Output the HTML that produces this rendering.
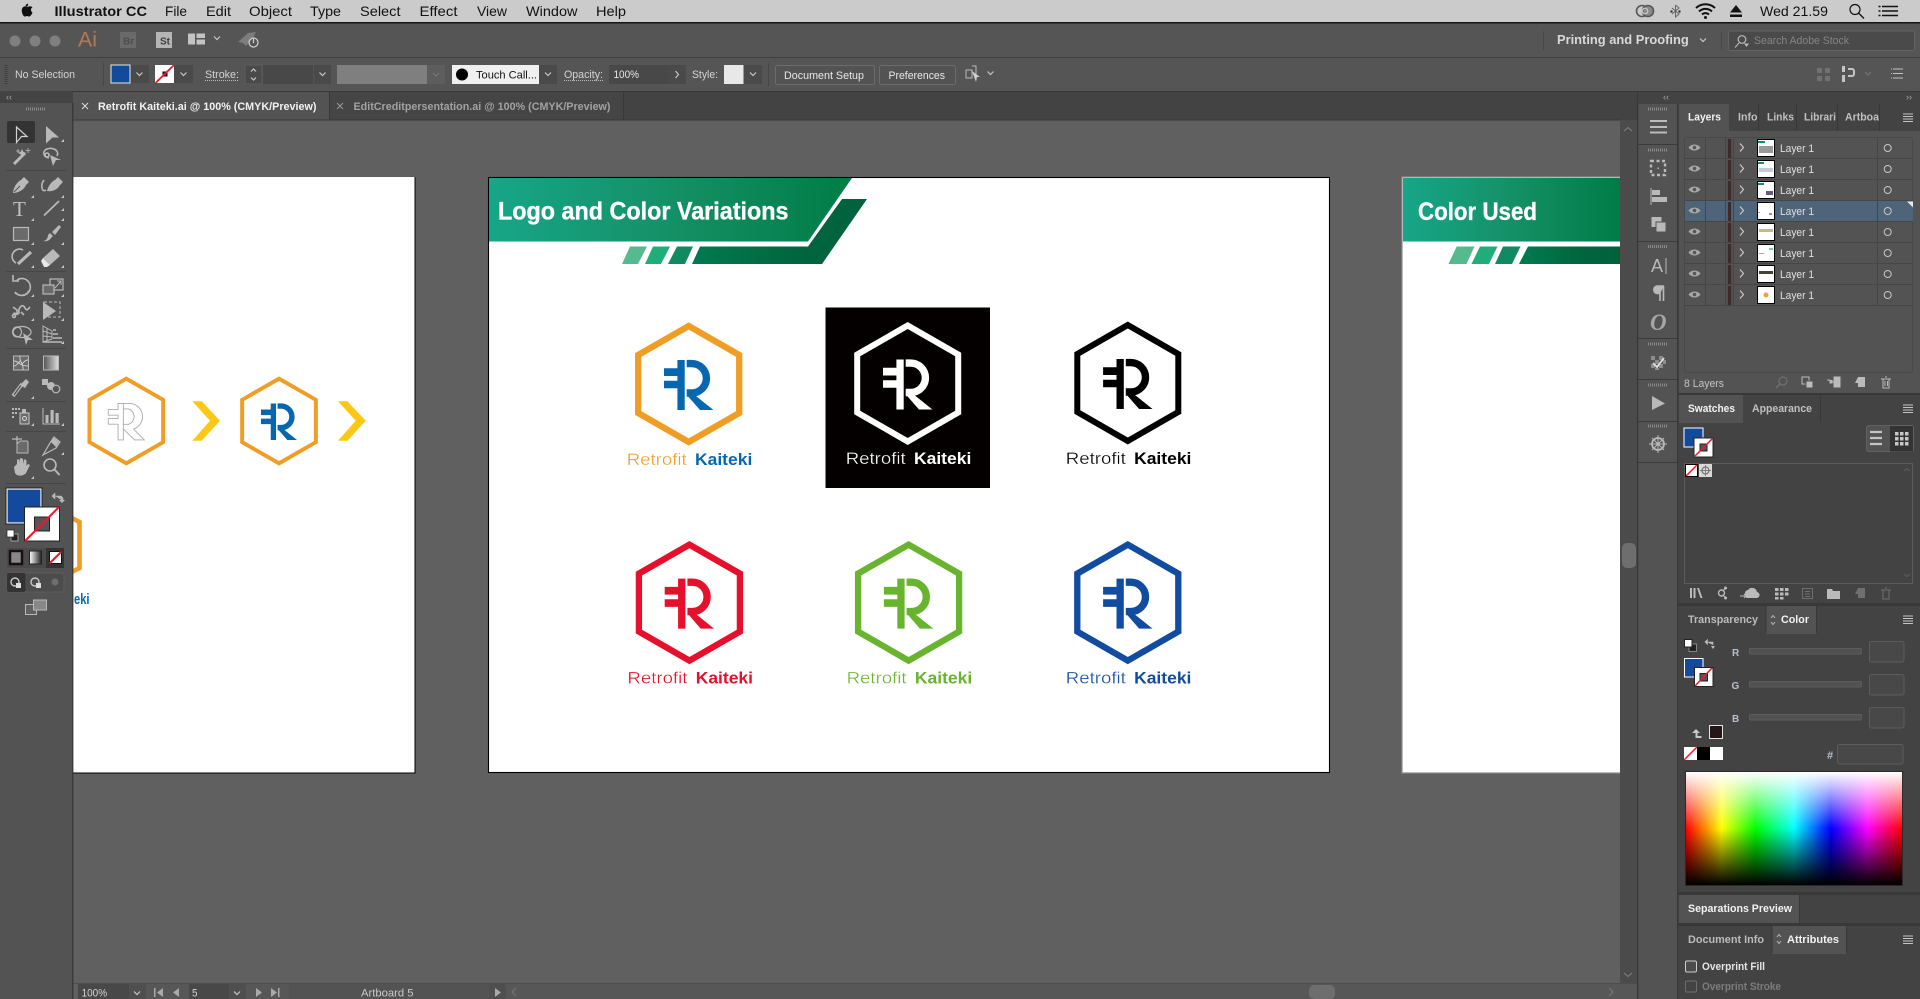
<!DOCTYPE html>
<html lang="en"><head><meta charset="utf-8"><title>Illustrator CC</title>
<style>
html,body{margin:0;padding:0;background:#535353;width:1920px;height:999px;overflow:hidden}
svg{display:block;font-family:"Liberation Sans",sans-serif}
.m{font-size:14px;fill:#111}
.u{font-size:11px;fill:#d4d4d4}
.b{font-size:11px;font-weight:bold;fill:#d8d8d8}
.w{font-size:11px;font-weight:bold;fill:#f2f2f2}
.d{font-size:11px;font-weight:bold;fill:#b4b4b4}
.ic{fill:#b9b9b9}
.is{fill:none;stroke:#b9b9b9;stroke-width:1.6}
.ch{fill:none;stroke:#c8c8c8;stroke-width:1.2}
.fr{fill:#4a4a4a}
.ln{stroke:#464646;stroke-width:1}
</style></head><body>
<svg width="1920" height="999" viewBox="0 0 1920 999" xmlns="http://www.w3.org/2000/svg">
<defs>
<linearGradient id="gb" x1="0" x2="1" y1="0" y2="0"><stop offset="0" stop-color="#17a688"/><stop offset=".5" stop-color="#159066"/><stop offset="1" stop-color="#007c46"/></linearGradient>
<linearGradient id="gd" x1="0" x2="1" y1="0" y2="0"><stop offset="0" stop-color="#007a50"/><stop offset=".6" stop-color="#00663f"/><stop offset="1" stop-color="#00613d"/></linearGradient>
<linearGradient id="gh" x1="0" x2="1" y1="0" y2="0"><stop offset="0" stop-color="#f00"/><stop offset=".165" stop-color="#ff0"/><stop offset=".32" stop-color="#0f0"/><stop offset=".5" stop-color="#0ff"/><stop offset=".67" stop-color="#00f"/><stop offset=".84" stop-color="#f0f"/><stop offset="1" stop-color="#f00"/></linearGradient>
<linearGradient id="gv" x1="0" x2="0" y1="0" y2="1"><stop offset="0" stop-color="#fff"/><stop offset=".5" stop-color="#fff" stop-opacity="0"/><stop offset=".5" stop-color="#000" stop-opacity="0"/><stop offset="1" stop-color="#000"/></linearGradient>
<linearGradient id="gg" x1="0" x2="1" y1="0" y2="0"><stop offset="0" stop-color="#555"/><stop offset="1" stop-color="#ddd"/></linearGradient>
<linearGradient id="gg2" x1="0" x2="1" y1="0" y2="0"><stop offset="0" stop-color="#fff"/><stop offset="1" stop-color="#222"/></linearGradient>
<g id="eye"><path d="M-6,0C-3,-4 3,-4 6,0C3,4 -3,4 -6,0Z" fill="#a8a8a8"/><circle r="1.8" fill="#555"/></g>
<g id="chev"><path d="M-3,-1.5L0,1.5L3,-1.5" class="ch"/></g>
<g id="menu"><path d="M0,0h10M0,2.5h10M0,5h10M0,7.5h10" stroke="#c4c4c4" stroke-width="1"/></g>
<g id="tri"><path d="M3,0V3H0Z" fill="#c4c4c4"/></g>
<g id="grip"><path d="M0,0h20" stroke="#8a8a8a" stroke-width="3" stroke-dasharray="1 1"/></g>
</defs>

<rect width="1920" height="999" fill="#535353"/>
<rect x="73" y="120" width="1547" height="879" fill="#606060"/>

<!-- left artboard -->
<rect x="73" y="177" width="342" height="596" fill="#fff"/>
<path d="M415,177V773H73" fill="none" stroke="#000" stroke-width="1"/>
<g transform="translate(126.3,421) scale(.73)">
<polygon points="0,-58 50.5,-29 50.5,29 0,58 -50.5,29 -50.5,-29" fill="none" stroke="#ef9d25" stroke-width="5.4"/>
<path d="M-24.7,-15.7H-11.3V-24H3A18,18 0 0 1 10,11L24.7,26H11.3L-4,11V26H-11.3V4.3H-24.7V-3.3H-11.3V-8H-24.7Z" fill="#fff" stroke="#aaa" stroke-width="1.2"/>
<path d="M-4,-24V11M-4,-16.5H3A11,11 0 0 1 3,4.5H-4" fill="none" stroke="#aaa" stroke-width="1.2"/>
</g>
<polygon points="192.3,401.3 201.7,401.3 220,420.7 201.7,440.7 192.3,440.7 210,420.7" fill="#fcc813"/>
<g transform="translate(279,421) scale(.73)" fill="#0667b0">
<polygon points="0,-58 50.5,-29 50.5,29 0,58 -50.5,29 -50.5,-29" fill="none" stroke="#ef9d25" stroke-width="5.4"/>
<path d="M-24.7,-15.7h13.4v7.7h-13.4zM-24.7,-3.3h13.4v7.6h-13.4zM-11.3,-24h7.3v50h-7.3z"/><path d="M-2,-20.4H3A14.7,14.7 0 0 1 3,9H-2" fill="none" stroke="#0667b0" stroke-width="7.4"/><polygon points="-.3,12.7 4.7,10 24.7,26 11.3,26"/>
</g>
<polygon points="338,401.3 347.4,401.3 365.7,420.7 347.4,440.7 338,440.7 355.7,420.7" fill="#fcc813"/>
<path d="M68,516L79.5,522V568L68,574" fill="none" stroke="#ef9d25" stroke-width="4.6"/>
<text x="74" y="604" font-size="15" font-weight="bold" fill="#0667b0" textLength="15.5" lengthAdjust="spacingAndGlyphs">eki</text>

<!-- center artboard -->
<rect x="488.5" y="177.5" width="841" height="595" fill="#fff" stroke="#000" stroke-width="1.1"/>
<polygon points="489,178 852,178 808,241.500 489,241.500" fill="url(#gb)"/>
<polygon points="842,199 867,199 822,264 692,264 700,246.500 808,246.500" fill="url(#gd)"/>
<polygon points="630,246.500 647,246.500 638,264 622,264" fill="#55bb8f"/>
<polygon points="653,246.500 670,246.500 661,264 645,264" fill="#1fae7a"/>
<polygon points="677,246.500 693,246.500 685,264 668,264" fill="#118a62"/>
<text x="498" y="219.3" font-size="25" font-weight="bold" fill="#fff" stroke="#fff" stroke-width=".35" textLength="290.5" lengthAdjust="spacingAndGlyphs">Logo and Color Variations</text>

<!-- logo 1 -->
<g transform="translate(688.7,384)" fill="#0667b0">
<polygon points="0,-58 50.5,-29 50.5,29 0,58 -50.5,29 -50.5,-29" fill="none" stroke="#ef9d25" stroke-width="6.3"/>
<path d="M-24.7,-15.7h13.4v7.7h-13.4zM-24.7,-3.3h13.4v7.6h-13.4zM-11.3,-24h7.3v50h-7.3z"/><path d="M-2,-20.4H3A14.7,14.7 0 0 1 3,9H-2" fill="none" stroke="#0667b0" stroke-width="7.4"/><polygon points="-.3,12.7 4.7,10 24.7,26 11.3,26"/>
<text x="-62" y="81" font-size="17" fill="#ef9d25" stroke="#fff" stroke-width=".3" textLength="60" lengthAdjust="spacingAndGlyphs">Retrofit</text>
<text x="6.3" y="81" font-size="17" font-weight="bold" textLength="57.3" lengthAdjust="spacingAndGlyphs">Kaiteki</text>
</g>
<!-- logo 2 black -->
<rect x="825.5" y="307.5" width="164.5" height="180.5" fill="#040000"/>
<g transform="translate(907.7,383.5)" fill="#fff">
<polygon points="0,-58 50.5,-29 50.5,29 0,58 -50.5,29 -50.5,-29" fill="none" stroke="#fff" stroke-width="6"/>
<path d="M-24.7,-15.7h13.4v7.7h-13.4zM-24.7,-3.3h13.4v7.6h-13.4zM-11.3,-24h7.3v50h-7.3z"/><path d="M-2,-20.4H3A14.7,14.7 0 0 1 3,9H-2" fill="none" stroke="#fff" stroke-width="7.4"/><polygon points="-.3,12.7 4.7,10 24.7,26 11.3,26"/>
<text x="-62" y="80.5" font-size="17" stroke="#040000" stroke-width=".3" textLength="60" lengthAdjust="spacingAndGlyphs">Retrofit</text>
<text x="6.3" y="80.5" font-size="17" font-weight="bold" textLength="57.3" lengthAdjust="spacingAndGlyphs">Kaiteki</text>
</g>
<!-- logo 3 -->
<g transform="translate(1127.8,383)" fill="#000">
<polygon points="0,-58 50.5,-29 50.5,29 0,58 -50.5,29 -50.5,-29" fill="none" stroke="#000" stroke-width="6"/>
<path d="M-24.7,-15.7h13.4v7.7h-13.4zM-24.7,-3.3h13.4v7.6h-13.4zM-11.3,-24h7.3v50h-7.3z"/><path d="M-2,-20.4H3A14.7,14.7 0 0 1 3,9H-2" fill="none" stroke="#000" stroke-width="7.4"/><polygon points="-.3,12.7 4.7,10 24.7,26 11.3,26"/>
<text x="-62" y="81" font-size="17" stroke="#fff" stroke-width=".3" textLength="60" lengthAdjust="spacingAndGlyphs">Retrofit</text>
<text x="6.3" y="81" font-size="17" font-weight="bold" textLength="57.3" lengthAdjust="spacingAndGlyphs">Kaiteki</text>
</g>
<!-- logo 4 -->
<g transform="translate(689.4,602.6)" fill="#e60f2c">
<polygon points="0,-58 50.5,-29 50.5,29 0,58 -50.5,29 -50.5,-29" fill="none" stroke="#e60f2c" stroke-width="6.3"/>
<path d="M-24.7,-15.7h13.4v7.7h-13.4zM-24.7,-3.3h13.4v7.6h-13.4zM-11.3,-24h7.3v50h-7.3z"/><path d="M-2,-20.4H3A14.7,14.7 0 0 1 3,9H-2" fill="none" stroke="#e60f2c" stroke-width="7.4"/><polygon points="-.3,12.7 4.7,10 24.7,26 11.3,26"/>
<text x="-62" y="81" font-size="17" stroke="#fff" stroke-width=".3" textLength="60" lengthAdjust="spacingAndGlyphs">Retrofit</text>
<text x="6.3" y="81" font-size="17" font-weight="bold" textLength="57.3" lengthAdjust="spacingAndGlyphs">Kaiteki</text>
</g>
<!-- logo 5 -->
<g transform="translate(908.6,602.6)" fill="#68b42e">
<polygon points="0,-58 50.5,-29 50.5,29 0,58 -50.5,29 -50.5,-29" fill="none" stroke="#68b42e" stroke-width="6.3"/>
<path d="M-24.7,-15.7h13.4v7.7h-13.4zM-24.7,-3.3h13.4v7.6h-13.4zM-11.3,-24h7.3v50h-7.3z"/><path d="M-2,-20.4H3A14.7,14.7 0 0 1 3,9H-2" fill="none" stroke="#68b42e" stroke-width="7.4"/><polygon points="-.3,12.7 4.7,10 24.7,26 11.3,26"/>
<text x="-62" y="81" font-size="17" stroke="#fff" stroke-width=".3" textLength="60" lengthAdjust="spacingAndGlyphs">Retrofit</text>
<text x="6.3" y="81" font-size="17" font-weight="bold" textLength="57.3" lengthAdjust="spacingAndGlyphs">Kaiteki</text>
</g>
<!-- logo 6 -->
<g transform="translate(1127.8,602.6)" fill="#124ca0">
<polygon points="0,-58 50.5,-29 50.5,29 0,58 -50.5,29 -50.5,-29" fill="none" stroke="#124ca0" stroke-width="6.3"/>
<path d="M-24.7,-15.7h13.4v7.7h-13.4zM-24.7,-3.3h13.4v7.6h-13.4zM-11.3,-24h7.3v50h-7.3z"/><path d="M-2,-20.4H3A14.7,14.7 0 0 1 3,9H-2" fill="none" stroke="#124ca0" stroke-width="7.4"/><polygon points="-.3,12.7 4.7,10 24.7,26 11.3,26"/>
<text x="-62" y="81" font-size="17" stroke="#fff" stroke-width=".3" textLength="60" lengthAdjust="spacingAndGlyphs">Retrofit</text>
<text x="6.3" y="81" font-size="17" font-weight="bold" textLength="57.3" lengthAdjust="spacingAndGlyphs">Kaiteki</text>
</g>

<!-- right artboard -->
<rect x="1402" y="177" width="218" height="596" fill="#fff"/>
<path d="M1620,177H1402V773H1620" fill="none" stroke="#8a8a8a" stroke-width="1.2"/>
<rect x="1403" y="178" width="217" height="63.500" fill="url(#gb)"/>
<polygon points="1528,246.500 1620,246.500 1620,264 1519,264" fill="url(#gd)"/>
<polygon points="1456.7,246.500 1474.5,246.500 1466.5,264 1448.5,264" fill="#55bb8f"/>
<polygon points="1480,246.500 1497.5,246.500 1489,264 1471.5,264" fill="#1fae7a"/>
<polygon points="1503,246.500 1520.5,246.500 1512,264 1495,264" fill="#118a62"/>
<text x="1418" y="220" font-size="25" font-weight="bold" fill="#fff" stroke="#fff" stroke-width=".35" textLength="119" lengthAdjust="spacingAndGlyphs">Color Used</text>

<!-- vertical scrollbar -->
<rect x="1620" y="120" width="17" height="863" fill="#4b4b4b"/>
<path d="M1624,131L1628,127.5L1632,131" fill="none" stroke="#777" stroke-width="1.2"/>
<path d="M1624,973L1628,976.5L1632,973" fill="none" stroke="#777" stroke-width="1.2"/>
<rect x="1622" y="543" width="14" height="25" rx="5" fill="#6e6e6e"/>

<!-- status bar -->
<rect x="73" y="983" width="1564" height="16" fill="#575757"/>
<rect x="73" y="983" width="1564" height="1" fill="#4d4d4d"/>
<rect x="73" y="984" width="5" height="15" fill="#606060"/>
<rect x="78" y="984" width="51" height="15" fill="#484848"/>
<text x="81.6" y="996.5" class="u" textLength="25.5" lengthAdjust="spacingAndGlyphs">100%</text>
<rect x="129" y="984" width="17" height="15" fill="#4f4f4f"/><use href="#chev" x="137" y="993"/>
<path d="M154,988v9h1.5v-9zM163,988v9l-6,-4.5z" fill="#aaa"/>
<path d="M179,988v9l-6,-4.5z" fill="#aaa"/>
<rect x="189" y="984" width="40" height="15" fill="#484848"/>
<text x="192" y="996.5" class="u" textLength="5.5" lengthAdjust="spacingAndGlyphs">5</text>
<rect x="229" y="984" width="17" height="15" fill="#4f4f4f"/><use href="#chev" x="237" y="993"/>
<path d="M256,988v9l6,-4.5z" fill="#aaa"/>
<path d="M271,988v9l6,-4.5zM278,988v9h1.5v-9z" fill="#aaa"/>
<rect x="289" y="984" width="200" height="15" fill="#535353"/>
<text x="361" y="996.5" class="u" style="fill:#c8c8c8" textLength="52.5" lengthAdjust="spacingAndGlyphs">Artboard 5</text>
<rect x="489" y="984" width="17" height="15" fill="#4f4f4f"/>
<path d="M495,988v9l6,-4.5z" fill="#aaa"/>
<path d="M516,988L512,992L516,996" fill="none" stroke="#777" stroke-width="1.2"/>
<path d="M1609,988L1613,992L1609,996" fill="none" stroke="#777" stroke-width="1.2"/>
<rect x="1309" y="985" width="26" height="14" rx="5" fill="#6e6e6e"/>

<!-- tab bar -->
<rect x="0" y="91" width="1638" height="29" fill="#434343"/>
<rect x="73" y="91" width="256" height="29" fill="#535353"/>
<rect x="329" y="91" width="294" height="29" fill="#454545"/>
<path d="M329.5,91V120M623.5,91V120M0,91.5H1920M73,120H1620" stroke="#383838" stroke-width="1"/>
<path d="M82,103l6,6m0,-6l-6,6" stroke="#dcdcdc" stroke-width="1"/>
<path d="M337,103l6,6m0,-6l-6,6" stroke="#9c9c9c" stroke-width="1"/>
<text x="98" y="110" class="w" textLength="218.5" lengthAdjust="spacingAndGlyphs">Retrofit Kaiteki.ai @ 100% (CMYK/Preview)</text>
<text x="353.5" y="110" class="d" style="fill:#a2a2a2" textLength="257" lengthAdjust="spacingAndGlyphs">EditCreditpersentation.ai @ 100% (CMYK/Preview)</text>

<!-- tools panel -->
<rect x="0" y="91" width="72" height="12" fill="#434343"/>
<rect x="0" y="103" width="72" height="896" fill="#535353"/>
<rect x="72" y="103" width="1.4" height="896" fill="#3a3a3a"/>
<text x="6" y="100" font-size="9" fill="#aaa">‹‹</text>
<use href="#grip" x="26" y="109"/>
<path d="M6.5,170.5H66M6.5,271.5H66M6.5,348.5H66M6.5,401.5H66M6.5,431.5H66M6.5,483.5H66" stroke="#464646"/>
<rect x="7" y="121" width="28" height="22" rx="2" fill="#333"/>
<path d="M16.5,127L27,136.5H21.5L16.5,142.5Z" fill="none" stroke="#d2d2d2" stroke-width="1.2"/>
<path d="M46,126L59,137.5H52.5L46,143.5Z" class="ic"/>
<g class="ic">
<use href="#tri" x="61" y="139"/><use href="#tri" x="61" y="208"/><use href="#tri" x="31" y="195"/><use href="#tri" x="61" y="195"/><use href="#tri" x="31" y="218"/><use href="#tri" x="61" y="218"/><use href="#tri" x="31" y="242"/><use href="#tri" x="61" y="242"/><use href="#tri" x="31" y="265"/><use href="#tri" x="61" y="265"/><use href="#tri" x="31" y="294"/><use href="#tri" x="61" y="294"/><use href="#tri" x="31" y="318"/><use href="#tri" x="61" y="318"/><use href="#tri" x="61" y="341"/><use href="#tri" x="31" y="396"/><use href="#tri" x="31" y="423"/><use href="#tri" x="61" y="423"/><use href="#tri" x="61" y="452"/><use href="#tri" x="31" y="476"/>
</g>
<path d="M14,164L25,153" stroke="#b9b9b9" stroke-width="3"/><path d="M22,150l1,2l2,1l-2,1l-1,2l-1,-2l-2,-1l2,-1zM28,148v5M25.5,150.5h5M18,149v4M16,151h4" fill="#b9b9b9" stroke="#b9b9b9" stroke-width=".8"/>
<path d="M57,156C60,150 52,147 47,149C42,151 43,157 49,158" class="is"/><path d="M50,155L61,160H56L53,166Z" class="ic"/><circle cx="47" cy="155" r="2" class="is"/>
<path d="M13,193C13,188 17,182 21,180L24,177L29,182L26,185C24,190 18,193 13,193Z" class="ic"/><path d="M14,192L20,186" stroke="#555" stroke-width="1"/>
<path d="M47,191C48,186 52,181 55,180L58,177L63,182L60,185C58,189 53,192 47,191Z" class="ic"/><path d="M44,180C40,185 42,193 46,190" class="is"/>
<text x="13" y="216" font-family="'Liberation Serif',serif" font-size="21" fill="#c0c0c0">T</text>
<path d="M44,215.5L59,201" stroke="#b9b9b9" stroke-width="1.8"/>
<rect x="13.5" y="227.5" width="15" height="13" fill="#6a6a6a" stroke="#b9b9b9" stroke-width="1.2"/>
<path d="M43,241C46,241 48,238 48,235L50,233L53,236L51,238C50,240 47,242 43,241Z" class="ic"/><path d="M52,232L59,225L61,227L55,235Z" class="ic"/>
<path d="M23,250A6.5,6.5 0 1 0 16,263" class="is"/><path d="M18,264L31,252" stroke="#b9b9b9" stroke-width="3.2"/>
<path d="M43,258L53,249L60,256L50,265Z" class="ic"/><path d="M43,258L50,265L47,267H44L41,261Z" fill="#e8e8e8"/>
<path d="M17,280A8.5,8.5 0 1 1 15,292" class="is"/><path d="M13,275V281H19" class="is"/><path d="M15,293A9,9 0 0 0 29,290" fill="none" stroke="#b9b9b9" stroke-width="1.4" stroke-dasharray="1.4 1.4"/>
<rect x="50" y="279" width="13" height="11" fill="none" stroke="#b9b9b9" stroke-width="1.2"/><rect x="43" y="285" width="11" height="9" fill="#6a6a6a" stroke="#b9b9b9" stroke-width="1.2"/><path d="M55,288L61,281M57,281h4v4" fill="none" stroke="#b9b9b9"/>
<path d="M13,315C15,310 16,317 19,313C18,307 23,303 25,308C27,312 29,308 30,307" class="is"/><path d="M13,307l4,3v5M21,312l3,3" class="is"/><circle cx="14" cy="316" r="1.5" class="is"/>
<path d="M43,302L56,311L43,320Z" class="ic"/><rect x="44" y="302" width="16" height="15" fill="none" stroke="#b9b9b9" stroke-dasharray="3 2"/>
<ellipse cx="17" cy="332" rx="4.5" ry="5" class="is" style="stroke-width:1.2"/><ellipse cx="22" cy="332" rx="9" ry="5.5" class="is" style="stroke-width:1.2"/><path d="M23,333L33,340H28L26,345Z" class="ic"/>
<path d="M43,326L52,331V339L43,342ZM43,331L52,334M43,336L52,337M47,328V341" class="is" style="stroke-width:1"/><path d="M53,330h3M53,334h5M53,338h9M43,342h19" stroke="#b9b9b9" stroke-width="1.4"/>
<rect x="13.5" y="356" width="15" height="14" fill="#6a6a6a" stroke="#b9b9b9"/><path d="M14,361C19,361 19,366 28,366M20,356C19,362 24,364 23,370M14,366C17,366 18,363 20,361M28,360C25,360 24,362 22,364" fill="none" stroke="#d4d4d4" stroke-width=".9"/>
<rect x="43.5" y="356" width="15" height="14" fill="url(#gg)" stroke="#b9b9b9"/>
<path d="M13,396L22,384" stroke="#b9b9b9" stroke-width="3.6" fill="none"/><path d="M14,395L21,385" stroke="#555" stroke-width="1.4"/><path d="M20,385L26,379L29,382L25,388Z" class="ic"/>
<rect x="42" y="379" width="6" height="6" class="ic"/><circle cx="51" cy="386" r="4" class="ic"/><circle cx="56" cy="389" r="3.8" fill="#535353" stroke="#b9b9b9" stroke-width="1.2"/>
<path d="M12,408h2v2h-2zM15,408h2v2h-2zM18,408h2v2h-2zM12,412h2v2h-2zM15,412h2v2h-2zM12,416h2v2h-2z" class="ic"/><rect x="20" y="413" width="9" height="11" fill="#6a6a6a" stroke="#c8c8c8"/><rect x="22" y="409" width="4" height="3.5" class="ic"/><circle cx="24.5" cy="418.5" r="2" fill="none" stroke="#ddd"/>
<path d="M43,408V424H60" class="is" style="stroke-width:1"/><path d="M45.5,415h3v8h-3zM50.5,410h3.2v13h-3.2zM55.5,413h3.2v10h-3.2z" class="ic"/>
<path d="M17,436v8M12,439h10" stroke="#b9b9b9" stroke-width="1.2"/><path d="M20,441h7l1,1v11H17v-9z" fill="#6a6a6a" stroke="#b9b9b9"/>
<path d="M43,455L50,443L54,437L60,442L56,448Z" class="is" style="stroke-width:1.2"/><path d="M54,438L59,442L56,447L51,442Z" class="ic"/>
<path d="M14,467L17,464V460L18,459L19.5,460V464L20,458.5L22,458L23,459.5V464L24,459.5L26,459.5L26.5,461V466L28,464L30,465L26,473C24,476 17,477 15,473Z" class="ic"/>
<circle cx="50" cy="465" r="6" class="is"/><path d="M54.5,469.5L59.5,475" stroke="#b9b9b9" stroke-width="2"/>

<!-- fill/stroke big -->
<path d="M52,496l3,-3v6zM55,496h6l2,2v3" fill="#b9b9b9" stroke="#b9b9b9" stroke-width=".6" stroke-linejoin="round"/><path d="M59,500l3,3l3,-3z" fill="#b9b9b9"/>
<rect x="7" y="489" width="34" height="34" fill="#134a9b" stroke="#fff" stroke-width="1.2"/>
<rect x="6" y="488" width="36" height="36" fill="none" stroke="#1f1f1f" stroke-width="1"/>
<rect x="24.5" y="507" width="35" height="34" fill="#fff" stroke="#222" stroke-width="1"/>
<rect x="34.5" y="517" width="15" height="14" fill="#555" stroke="#222" stroke-width="1"/>
<path d="M25,541L59,507" stroke="#f4142c" stroke-width="2"/>
<rect x="11" y="534" width="7" height="7" fill="#222" stroke="#ccc" stroke-width=".7"/><rect x="7" y="530" width="7" height="7" fill="#fff" stroke="#222" stroke-width=".7"/>
<rect x="7" y="548" width="57" height="20" rx="2" fill="#4a4a4a"/>
<rect x="46" y="548" width="18" height="20" fill="#333"/>
<rect x="10" y="551" width="12" height="13" fill="#888" stroke="#1a1010" stroke-width="2.5"/><rect x="29.5" y="551" width="12" height="13" fill="url(#gg2)" stroke="#222"/>
<rect x="49.5" y="551.5" width="12" height="12" fill="#fff" stroke="#111"/><path d="M49.5,563.5L61.5,551.5" stroke="#f4142c" stroke-width="2"/>
<rect x="7" y="573" width="57" height="19" rx="2" fill="#4c4c4c" stroke="#5c5c5c"/><rect x="7" y="573" width="18.5" height="19" rx="2" fill="#333"/>
<circle cx="15" cy="582" r="4" fill="none" stroke="#c8c8c8" stroke-width="1.4"/><rect x="16" y="583" width="5" height="5" fill="#ddd"/>
<circle cx="35" cy="582" r="4" fill="none" stroke="#c8c8c8" stroke-width="1.4"/><rect x="36" y="583" width="5" height="5" fill="#ddd"/>
<circle cx="55" cy="582" r="3.5" fill="#6e6e6e"/>
<path d="M25.5,604.5h11v10h-11z" fill="#606060" stroke="#b9b9b9"/><rect x="33.5" y="600" width="13" height="10" fill="#888" stroke="#b9b9b9"/>

<!-- menubar -->
<rect width="1920" height="22" fill="#cbcbcb"/>
<rect y="22" width="1920" height="1.5" fill="#151515"/>
<path d="M27.5,6C27,6.5 26,6.8 25.5,6.5C25.5,5 26.5,4 28,3.5C28.2,5 28,5.5 27.5,6ZM31,9.5C30.9,8.5 31.5,8 32.5,7.5C31.5,6.2 29.5,6 28.5,6.6C27.5,7 27,7 26,6.6C24.5,6 22,7 21.8,10C21.6,12.5 23,16 24.5,16.5C25.5,16.8 26,16 27,16C28,16 28.5,16.8 29.5,16.5C30.8,16 32,14 32.5,12.5C31.5,12 31,11 31,9.5Z" fill="#111"/>
<text x="54.5" y="16" class="m" font-weight="bold" textLength="92.5" lengthAdjust="spacingAndGlyphs">Illustrator CC</text>
<text x="165" y="16" class="m" textLength="22" lengthAdjust="spacingAndGlyphs">File</text>
<text x="206" y="16" class="m" textLength="25" lengthAdjust="spacingAndGlyphs">Edit</text>
<text x="249" y="16" class="m" textLength="43" lengthAdjust="spacingAndGlyphs">Object</text>
<text x="310" y="16" class="m" textLength="31" lengthAdjust="spacingAndGlyphs">Type</text>
<text x="360" y="16" class="m" textLength="40.5" lengthAdjust="spacingAndGlyphs">Select</text>
<text x="419.5" y="16" class="m" textLength="38" lengthAdjust="spacingAndGlyphs">Effect</text>
<text x="477" y="16" class="m" textLength="30" lengthAdjust="spacingAndGlyphs">View</text>
<text x="526" y="16" class="m" textLength="51.5" lengthAdjust="spacingAndGlyphs">Window</text>
<text x="596" y="16" class="m" textLength="30" lengthAdjust="spacingAndGlyphs">Help</text>
<circle cx="1642" cy="11" r="5.5" fill="none" stroke="#555" stroke-width="1.6"/><circle cx="1648" cy="11" r="5.5" fill="#8a8a8a" stroke="#555" stroke-width="1.6"/><circle cx="1645" cy="11" r="2.8" fill="none" stroke="#cbcbcb" stroke-width="1.2"/>
<path d="M1675.5,5V17L1679,14L1672,8M1675.5,5L1679,8L1672,14" fill="none" stroke="#666" stroke-width="1"/><path d="M1670.5,10.5h2v2h-2zM1678.5,10.5h2v2h-2z" fill="#222"/>
<path d="M1696,8A14,14 0 0 1 1715,8M1699,11.5A9.5,9.5 0 0 1 1712,11.5M1702,14.5A5,5 0 0 1 1709,14.5" fill="none" stroke="#111" stroke-width="2"/><circle cx="1705.5" cy="17.5" r="1.5" fill="#111"/>
<path d="M1730,12.5L1736,5L1742,12.5ZM1730,14.5h12v2.5h-12z" fill="#111"/>
<text x="1760" y="16" class="m" textLength="68" lengthAdjust="spacingAndGlyphs">Wed 21.59</text>
<circle cx="1855" cy="9.5" r="5" fill="none" stroke="#111" stroke-width="1.2"/><path d="M1858.5,13L1864,18.5" stroke="#111" stroke-width="1.3"/>
<path d="M1882,6.5h16M1882,11h16M1882,15.5h16M1878.5,6.5h2M1878.5,11h2M1878.5,15.5h2" stroke="#111" stroke-width="1.6"/>

<!-- app bar -->
<path d="M0,57V27Q0,23.5 4,23.5H1916Q1920,23.5 1920,27V57Z" fill="#555"/>
<rect y="57" width="1920" height="1.3" fill="#3e3e3e"/>
<circle cx="15" cy="41" r="5.5" fill="#7f7f7f"/><circle cx="35" cy="41" r="5.5" fill="#7f7f7f"/><circle cx="55" cy="41" r="5.5" fill="#7f7f7f"/>
<text x="78" y="46.5" font-size="21" fill="#b27b58" textLength="19" lengthAdjust="spacingAndGlyphs">Ai</text>
<rect x="120" y="32" width="16" height="16" fill="#6a6a6a"/><text x="123" y="44.5" font-size="10" font-weight="bold" fill="#4d4d4d">Br</text>
<rect x="156" y="32" width="16" height="16" fill="#b5b5b5"/><text x="160" y="44.5" font-size="10" font-weight="bold" fill="#3f3f3f">St</text>
<path d="M188,33.5h7v11h-7zM196.5,33.5h8.5v4.5h-8.5zM196.5,39.5h8.5v5h-8.500z" fill="#c4c4c4"/>
<use href="#chev" x="217" y="38"/>
<path d="M238,42L248,33L256,32L253,38L246,46L243,43Z" fill="#7d7d7d"/><circle cx="253.5" cy="42.5" r="4.5" fill="none" stroke="#ccc" stroke-width="1.3"/><path d="M253.5,38.5v4.5" stroke="#ccc" stroke-width="1.3"/>
<path d="M1543.5,31V50M1721.5,31V50" stroke="#494949"/>
<text x="1557" y="44" font-size="13" font-weight="bold" fill="#d9d9d9" textLength="131.7" lengthAdjust="spacingAndGlyphs">Printing and Proofing</text>
<use href="#chev" x="1703" y="40"/>
<rect x="1728.5" y="31" width="186" height="19.5" rx="2" fill="#4a4a4a" stroke="#626262"/>
<circle cx="1742" cy="39.5" r="3.8" fill="none" stroke="#bbb" stroke-width="1.2"/><path d="M1739,43L1735,47.5M1745,44h3l-1.5,2z" stroke="#bbb" fill="#bbb"/>
<text x="1754" y="44" class="u" style="fill:#858585" textLength="95" lengthAdjust="spacingAndGlyphs">Search Adobe Stock</text>

<!-- control bar -->
<rect y="58" width="1920" height="33" fill="#555"/>
<path d="M6,65V84" stroke="#3f3f3f" stroke-width="3" stroke-dasharray="1 1"/>
<text x="15" y="78" class="u" textLength="60" lengthAdjust="spacingAndGlyphs">No Selection</text>
<path d="M103.5,63V86M768.5,63V86" stroke="#474747"/>
<rect x="111" y="65" width="19" height="18" fill="#134a9b" stroke="#e8e8e8"/>
<rect x="130.5" y="65" width="18.5" height="18" class="fr"/><use href="#chev" x="139.5" y="74"/>
<rect x="155" y="65" width="19" height="18" fill="#fff"/><rect x="163" y="72" width="4" height="4" fill="#444" stroke="#000"/><path d="M155.5,83L174,65" stroke="#f4142c" stroke-width="1.8"/>
<rect x="174" y="65" width="19" height="18" class="fr"/><use href="#chev" x="183.5" y="74"/>
<text x="205" y="78" class="u" textLength="34" lengthAdjust="spacingAndGlyphs">Stroke:</text>
<path d="M205,80.5H239" stroke="#bbb" stroke-dasharray="1 1"/>
<rect x="245" y="65" width="17" height="19" class="fr" stroke="#5d5d5d"/>
<path d="M251,71.5L253.5,69L256,71.5M251,77.5L253.5,80L256,77.5" class="ch"/>
<rect x="263" y="65" width="50" height="19" fill="#484848"/>
<rect x="314" y="65" width="17" height="19" class="fr"/><use href="#chev" x="322.5" y="74"/>
<rect x="337" y="65" width="90" height="19" fill="#7f7f7f"/>
<rect x="427" y="65" width="18" height="19" fill="#5d5d5d"/><path d="M433,73L436,76L439,73" fill="none" stroke="#777" stroke-width="1.1"/>
<rect x="452" y="65" width="87" height="19" fill="#f0f0f0"/><circle cx="462" cy="74.5" r="6" fill="#000"/>
<text x="476" y="78.5" class="u" style="fill:#111" textLength="61" lengthAdjust="spacingAndGlyphs">Touch Call...</text>
<rect x="539" y="65" width="18" height="19" class="fr"/><use href="#chev" x="548" y="74"/>
<text x="564" y="78" class="u" textLength="39" lengthAdjust="spacingAndGlyphs">Opacity:</text>
<path d="M564,80.5H603" stroke="#bbb" stroke-dasharray="1 1"/>
<rect x="609" y="65" width="59" height="19" fill="#484848"/>
<text x="613.5" y="78" class="u" style="fill:#e8e8e8" textLength="25.5" lengthAdjust="spacingAndGlyphs">100%</text>
<rect x="668" y="65" width="18" height="19" class="fr"/><path d="M675.5,71L678.5,74.5L675.5,78" class="ch"/>
<text x="692" y="78" class="u" textLength="26" lengthAdjust="spacingAndGlyphs">Style:</text>
<rect x="724" y="65" width="19.5" height="19" fill="#e8e8e8"/>
<rect x="743.5" y="65" width="18.5" height="19" class="fr"/><use href="#chev" x="753" y="74"/>
<rect x="775.5" y="65.5" width="99" height="19" rx="2" fill="#535353" stroke="#6c6c6c"/>
<text x="784" y="79" class="u" style="fill:#e8e8e8" textLength="80" lengthAdjust="spacingAndGlyphs">Document Setup</text>
<rect x="879.5" y="65.5" width="76" height="19" rx="2" fill="#535353" stroke="#6c6c6c"/>
<text x="888.5" y="79" class="u" style="fill:#e8e8e8" textLength="56.5" lengthAdjust="spacingAndGlyphs">Preferences</text>
<path d="M966,70h6v8h-6zM972,66h4v10" fill="none" stroke="#bbb"/><path d="M972,71l8,6h-3l-1,5z" fill="#cfcfcf"/><use href="#chev" x="990.5" y="73"/>
<path d="M1817,68h5v5h-5zM1825,68h5v5h-5zM1817,76h5v5h-5zM1825,76h5v5h-5z" fill="#717171"/>
<path d="M1842,66h3v6h-3zM1842,75h3v7h-3z" fill="#c4c4c4"/><path d="M1848,69h4a2,2 0 0 1 2,2v3a2,2 0 0 1 -2,2h-4" fill="none" stroke="#c4c4c4" stroke-width="2"/><path d="M1865,72L1868,75L1871,72" fill="none" stroke="#777"/>
<path d="M1893,69h10M1893,73.5h10M1893,78h10M1891,69h1M1891,73.5h1M1891,78h1" stroke="#c4c4c4"/>

<!-- right dock -->
<rect x="1637" y="91" width="283" height="908" fill="#434343"/>
<rect x="1638" y="103" width="39.5" height="896" fill="#535353"/>
<rect x="1637" y="91" width="1.3" height="908" fill="#383838"/>
<rect x="1677" y="103" width="1.3" height="896" fill="#383838"/>
<rect x="1638" y="91" width="282" height="13" fill="#434343"/>
<path d="M1638,91.5H1920" stroke="#383838"/>
<text x="1663" y="100" font-size="9" fill="#aaa">‹‹</text>
<text x="1906" y="100" font-size="9" fill="#aaa">››</text>
<path d="M1638,144.5h39M1638,241.5h39M1638,338.5h39M1638,379.5h39M1638,421.5h39M1638,462.5h39" stroke="#3a3a3a"/>
<path d="M1648,109h20M1648,150h20M1648,246.5h20M1648,344h20M1648,385h20M1648,426h20" stroke="#8a8a8a" stroke-width="3" stroke-dasharray="1 1"/>
<path d="M1650,121h17M1650,127h17M1650,132.5h17" stroke="#bbb" stroke-width="2"/>
<rect x="1651" y="161" width="14" height="14" fill="none" stroke="#b9b9b9" stroke-width="2.4" stroke-dasharray="3 2.5"/><rect x="1657.5" y="167.5" width="1.5" height="1.5" fill="#b9b9b9"/>
<path d="M1651,188V205" stroke="#b9b9b9"/><rect x="1652" y="190" width="8" height="5" fill="#b9b9b9"/><rect x="1652" y="197" width="15" height="5" fill="#b9b9b9"/>
<rect x="1651.5" y="217" width="10" height="10" fill="#b9b9b9"/><rect x="1656" y="222" width="10" height="10" fill="#b9b9b9" stroke="#535353"/>
<text x="1651" y="272" font-size="18" fill="#b9b9b9">A</text><path d="M1666,258V274" stroke="#b9b9b9"/>
<path d="M1660,286V301M1663.5,286V301M1664,286H1657A3.8,3.8 0 0 0 1657,293.5H1660" fill="#b9b9b9" stroke="#b9b9b9" stroke-width="1.6"/>
<text x="1650" y="330" font-family="'Liberation Serif',serif" font-style="italic" font-weight="bold" font-size="23" fill="#a6a6a6">O</text>
<path d="M1651,356h4v4h-4zM1659,356h4v4h-4zM1655,360h4v4h-4zM1663,360h3v4h-3zM1651,364h4v4h-4zM1659,364h4v4h-4zM1655,368h4v2h-4z" fill="#8c8c8c"/><path d="M1653,363l4,4l7,-9" fill="none" stroke="#e4e4e4" stroke-width="1.8"/>
<path d="M1652,396L1665,403.5L1652,410Z" fill="#b9b9b9"/>
<circle cx="1658" cy="444" r="6" fill="none" stroke="#b9b9b9" stroke-width="1.8"/><circle cx="1658" cy="444" r="1.8" fill="#b9b9b9"/><path d="M1658,435V453M1649,444H1667M1652,438L1664,450M1664,438L1652,450" stroke="#b9b9b9"/>

<!-- Layers panel -->
<rect x="1679" y="104" width="241" height="27" fill="#434343"/>
<rect x="1679" y="131" width="241" height="262" fill="#535353"/>
<rect x="1679" y="104" width="50" height="28" fill="#535353"/>
<path d="M1758.5,104V131M1796.5,104V131M1837.5,104V131M1879.5,104V131" stroke="#383838"/>
<text x="1688" y="120.5" class="w" textLength="33" lengthAdjust="spacingAndGlyphs">Layers</text>
<text x="1738" y="120.5" class="b" style="fill:#c0c0c0" textLength="19.5" lengthAdjust="spacingAndGlyphs">Info</text>
<text x="1767" y="120.5" class="b" style="fill:#c0c0c0" textLength="27" lengthAdjust="spacingAndGlyphs">Links</text>
<text x="1804" y="120.5" class="b" style="fill:#c0c0c0" textLength="32" lengthAdjust="spacingAndGlyphs">Librari</text>
<text x="1845" y="120.5" class="b" style="fill:#c0c0c0" textLength="34" lengthAdjust="spacingAndGlyphs">Artboa</text>
<use href="#menu" x="1903" y="114"/>
<rect x="1684.5" y="137.5" width="228" height="235" rx="2" fill="#535353" stroke="#494949"/>
<rect x="1685" y="200.5" width="228" height="21" fill="#4e6479"/>
<path d="M1907,201.5h6v6z" fill="#e8e8e8"/>
<g class="ln"><path d="M1685,158.5H1913M1685,179.5H1913M1685,200.5H1913M1685,221.5H1913M1685,242.5H1913M1685,263.5H1913M1685,284.5H1913M1685,305.5H1913"/><path d="M1705.5,138V305M1725.5,138V305M1733.5,138V305M1877.5,138V305"/></g>
<path d="M1729.5,139V305" stroke="#3d2b2b" stroke-width="3.2" stroke-dasharray="19 2"/>
<use href="#eye" x="1694.5" y="147.5"/><use href="#eye" x="1694.5" y="168.5"/><use href="#eye" x="1694.5" y="189.5"/><use href="#eye" x="1694.5" y="210.5"/><use href="#eye" x="1694.5" y="231.5"/><use href="#eye" x="1694.5" y="252.5"/><use href="#eye" x="1694.5" y="273.5"/><use href="#eye" x="1694.5" y="294.5"/>
<path d="M1740,143.5l3.5,4l-3.5,4M1740,164.5l3.5,4l-3.5,4M1740,185.5l3.5,4l-3.5,4M1740,206.5l3.5,4l-3.5,4M1740,227.5l3.5,4l-3.5,4M1740,248.5l3.5,4l-3.5,4M1740,269.5l3.5,4l-3.5,4M1740,290.5l3.5,4l-3.5,4" class="ch"/>
<g fill="#fff" stroke="#000">
<rect x="1757.5" y="139.5" width="17" height="17"/><rect x="1757.5" y="160.5" width="17" height="17"/><rect x="1757.5" y="181.5" width="17" height="17"/><rect x="1757.5" y="202.5" width="17" height="17"/><rect x="1757.5" y="223.5" width="17" height="17"/><rect x="1757.5" y="244.5" width="17" height="17"/><rect x="1757.5" y="265.5" width="17" height="17"/><rect x="1757.5" y="286.5" width="17" height="17"/>
</g>
<path d="M1758,141h7v2h-7z" fill="#109070"/><path d="M1759,146h14v7h-14z" fill="#999"/>
<path d="M1758,162h6v2h-6z" fill="#109070"/><path d="M1759,168h14v4h-14z" fill="#c4ccd8"/>
<path d="M1758,183h6v2h-6z" fill="#109070"/><path d="M1766,191h7v4h-7z" fill="#6a5a7a"/>
<path d="M1758,212h2v1h-2zM1769,213h3v2h-3z" fill="#b88"/>
<path d="M1759,229h14v3h-14z" fill="#c8b888"/>
<path d="M1769,248h4v2h-4z" fill="#7cb"/><path d="M1759,253h5v1h-5z" fill="#c99"/>
<path d="M1759,271h14v3h-14z" fill="#443"/>
<circle cx="1766" cy="295" r="2.5" fill="#eaa24a"/>
<g class="u" style="fill:#e0e0e0">
<text x="1780" y="152" textLength="34" lengthAdjust="spacingAndGlyphs">Layer 1</text>
<text x="1780" y="173" textLength="34" lengthAdjust="spacingAndGlyphs">Layer 1</text>
<text x="1780" y="194" textLength="34" lengthAdjust="spacingAndGlyphs">Layer 1</text>
<text x="1780" y="215" textLength="34" lengthAdjust="spacingAndGlyphs">Layer 1</text>
<text x="1780" y="236" textLength="34" lengthAdjust="spacingAndGlyphs">Layer 1</text>
<text x="1780" y="257" textLength="34" lengthAdjust="spacingAndGlyphs">Layer 1</text>
<text x="1780" y="278" textLength="34" lengthAdjust="spacingAndGlyphs">Layer 1</text>
<text x="1780" y="299" textLength="34" lengthAdjust="spacingAndGlyphs">Layer 1</text>
</g>
<g fill="none" stroke="#c8c8c8" stroke-width="1"><circle cx="1887.7" cy="148" r="3.5"/><circle cx="1887.7" cy="169" r="3.5"/><circle cx="1887.7" cy="190" r="3.5"/><circle cx="1887.7" cy="211" r="3.5"/><circle cx="1887.7" cy="232" r="3.5"/><circle cx="1887.7" cy="253" r="3.5"/><circle cx="1887.7" cy="274" r="3.5"/><circle cx="1887.7" cy="295" r="3.5"/></g>
<text x="1684" y="387" class="u" style="fill:#c4c4c4" textLength="40" lengthAdjust="spacingAndGlyphs">8 Layers</text>
<circle cx="1783" cy="381" r="4" fill="none" stroke="#6f6f6f" stroke-width="1.2"/><path d="M1780,384L1776,388" stroke="#6f6f6f" stroke-width="1.5"/>
<rect x="1802" y="377" width="7" height="7" fill="none" stroke="#bbb"/><rect x="1806" y="381" width="7" height="7" fill="#bbb" stroke="#535353"/>
<path d="M1827,380h3v3h2v-3M1832,382h3M1834,377h6v10h-6z" fill="#bbb" stroke="#bbb"/>
<path d="M1858,377h7v10h-7v-4h-3z" fill="#bbb"/>
<path d="M1881,379h10M1883,379v9h6v-9M1885,377h2M1885,381v5M1887.5,381v5" fill="none" stroke="#bbb"/>

<!-- Swatches panel -->
<rect x="1678" y="393" width="242" height="2" fill="#383838"/>
<rect x="1679" y="395" width="241" height="27" fill="#434343"/>
<rect x="1679" y="395" width="64" height="28" fill="#535353"/>
<path d="M1820.5,395V422" stroke="#383838"/>
<text x="1688" y="412" class="w" textLength="47" lengthAdjust="spacingAndGlyphs">Swatches</text>
<text x="1752" y="412" class="b" style="fill:#c0c0c0" textLength="60" lengthAdjust="spacingAndGlyphs">Appearance</text>
<use href="#menu" x="1903" y="405"/>
<rect x="1684" y="428" width="19" height="19" fill="#134a9b" stroke="#fff"/>
<rect x="1694" y="438" width="19" height="19" fill="#fff" stroke="#222"/><rect x="1700" y="444" width="7" height="7" fill="#555" stroke="#222"/><path d="M1695,456L1712,439" stroke="#f4142c" stroke-width="1.5"/>
<rect x="1866.5" y="425.5" width="47" height="26" rx="2" fill="#535353" stroke="#616161"/><rect x="1890" y="426" width="23" height="25.5" fill="#333"/>
<path d="M1870,432h12M1870,438h12M1870,444h12" stroke="#c4c4c4" stroke-width="2.2"/>
<path d="M1895,432h3.5v3.5h-3.5zM1900,432h3.5v3.5h-3.5zM1905,432h3.5v3.5h-3.5zM1895,437h3.5v3.5h-3.5zM1900,437h3.5v3.5h-3.5zM1905,437h3.5v3.5h-3.5zM1895,442h3.5v3.5h-3.5zM1900,442h3.5v3.5h-3.5zM1905,442h3.5v3.5h-3.5z" fill="#c8c8c8"/>
<rect x="1684.5" y="463.5" width="228" height="120" fill="none" stroke="#5c5c5c"/>
<path d="M1904,471l3,-2.5l3,2.5M1904,574l3,2.5l3,-2.5" fill="none" stroke="#5f5f5f"/>
<rect x="1685.5" y="464.5" width="12" height="12" fill="#fff" stroke="#000"/><path d="M1686,476L1697,465" stroke="#f4142c" stroke-width="1.5"/>
<rect x="1699" y="464" width="13" height="13" fill="#d8d8d8"/><circle cx="1705.5" cy="470.5" r="3.5" fill="none" stroke="#666"/><path d="M1705.5,465v11M1700,470.5h11" stroke="#666" stroke-width=".7"/>
<path d="M1690,588v10h2v-10zM1693.5,588v10h2v-10zM1697,588l3.500,10h2l-3.500,-10z" fill="#bbb"/>
<circle cx="1721.5" cy="593" r="3" fill="none" stroke="#bbb" stroke-width="1.4"/><path d="M1722,591l5,-3M1722,595l5,3" stroke="#bbb"/><circle cx="1725.5" cy="588" r="1.5" fill="#bbb"/><circle cx="1725.5" cy="598" r="1.5" fill="#bbb"/>
<path d="M1746,598h10a3,3 0 0 0 1,-6a5,5 0 0 0 -9,-2a3.5,3.5 0 0 0 -2,6z" fill="#bbb"/><path d="M1740,596h6m-2,-2l2,2l-2,2" stroke="#bbb" fill="none"/>
<path d="M1775,588h3.5v3h-3.5zM1780,588h3.5v3h-3.5zM1785,588h3.5v3h-3.5zM1775,592.5h3.5v3h-3.5zM1780,592.5h3.5v3h-3.5zM1785,592.5h3.5v3h-3.5zM1775,597h3.5v2.5h-3.5zM1780,597h3.5v2.5h-3.5z" fill="#bbb"/>
<rect x="1802.5" y="588.5" width="10" height="10" fill="none" stroke="#6f6f6f"/><path d="M1805,591.5h5M1805,594h5M1805,596.5h5" stroke="#6f6f6f"/>
<path d="M1827,589h5l1,2h7v8h-13z" fill="#bbb"/>
<path d="M1858,588h7v10h-7v-4h-3z" fill="#6f6f6f"/>
<path d="M1881,590h10M1883,590v9h6v-9M1885,588h2" fill="none" stroke="#6f6f6f"/>

<!-- Color panel -->
<rect x="1678" y="603" width="242" height="3" fill="#383838"/>
<rect x="1679" y="606" width="241" height="27" fill="#434343"/>
<rect x="1766" y="606" width="50" height="28" fill="#535353"/>
<path d="M1766,606V633M1816.5,606V633" stroke="#383838"/>
<text x="1688" y="623" class="b" style="fill:#bcbcbc" textLength="70" lengthAdjust="spacingAndGlyphs">Transparency</text>
<path d="M1771,618l2,-2.5l2,2.5M1771,622l2,2.5l2,-2.5" fill="none" stroke="#bbb"/>
<text x="1781" y="623" class="w" textLength="28" lengthAdjust="spacingAndGlyphs">Color</text>
<use href="#menu" x="1903" y="616"/>
<rect x="1689" y="644" width="7.5" height="7.5" fill="#222" stroke="#aaa" stroke-width=".7"/><rect x="1684.5" y="639.5" width="7.5" height="7.5" fill="#fff" stroke="#222"/>
<path d="M1705,642l2.5,-2.5v5zM1707,642h6v3" fill="#bbb" stroke="#bbb" stroke-width=".6"/><path d="M1711,646l2,3l2,-3z" fill="#bbb"/>
<rect x="1684.5" y="658.5" width="18.5" height="18.5" fill="#134a9b" stroke="#fff"/>
<rect x="1694.5" y="667.5" width="18.5" height="19" fill="#fff" stroke="#222"/><rect x="1700" y="673.5" width="7.5" height="7.5" fill="#555" stroke="#222"/><path d="M1695,686L1712,668" stroke="#f4142c" stroke-width="1.5"/>
<text x="1732" y="656" font-size="10" font-weight="bold" fill="#b4c0cc">R</text>
<text x="1731.5" y="689" font-size="10" font-weight="bold" fill="#b4c0cc">G</text>
<text x="1732" y="722" font-size="10" font-weight="bold" fill="#b4c0cc">B</text>
<rect x="1749.5" y="648.5" width="112" height="5.5" rx="1" fill="#515151" stroke="#5c5c5c"/>
<rect x="1749.5" y="681.5" width="112" height="5.5" rx="1" fill="#515151" stroke="#5c5c5c"/>
<rect x="1749.5" y="714.5" width="112" height="5.5" rx="1" fill="#515151" stroke="#5c5c5c"/>
<rect x="1869.5" y="641.5" width="34.5" height="20.5" rx="2" fill="#484848" stroke="#5c5c5c"/>
<rect x="1869.5" y="674.5" width="34.5" height="20.5" rx="2" fill="#484848" stroke="#5c5c5c"/>
<rect x="1869.5" y="707.5" width="34.5" height="20.5" rx="2" fill="#484848" stroke="#5c5c5c"/>
<path d="M1692,733l4,-4l4,4h-2.5v3h4v2h-6v-5z" fill="#c8c8c8"/>
<rect x="1709.5" y="725.5" width="13" height="13" fill="#231815" stroke="#e6e6e6"/>
<rect x="1684" y="747" width="13" height="13" fill="#fff"/><path d="M1684,760L1697,747" stroke="#f4142c" stroke-width="1.5"/>
<rect x="1697" y="747" width="13" height="13" fill="#000"/><rect x="1710" y="747" width="13" height="13" fill="#fff"/>
<text x="1827" y="759" font-size="11" font-weight="bold" fill="#b4c0cc">#</text>
<rect x="1837.5" y="744.5" width="65.5" height="19.5" rx="2" fill="#484848" stroke="#5c5c5c"/>
<rect x="1685.5" y="771.5" width="217" height="114" fill="#000" stroke="#2a2a2a"/>
<rect x="1686" y="772" width="216" height="113" fill="url(#gh)"/>
<rect x="1686" y="772" width="216" height="113" fill="url(#gv)"/>

<!-- Separations -->
<rect x="1678" y="892" width="242" height="3" fill="#383838"/>
<rect x="1679" y="895" width="241" height="28" fill="#434343"/>
<rect x="1679" y="895" width="120" height="28" fill="#535353"/>
<path d="M1799.5,895V923" stroke="#383838"/>
<text x="1688" y="912" class="w" textLength="104" lengthAdjust="spacingAndGlyphs">Separations Preview</text>
<rect x="1678" y="923" width="242" height="3" fill="#383838"/>
<rect x="1679" y="926" width="241" height="27" fill="#434343"/>
<rect x="1772" y="926" width="74" height="28" fill="#535353"/>
<path d="M1772,926V953M1846.5,926V953" stroke="#383838"/>
<text x="1688" y="943" class="b" style="fill:#bcbcbc" textLength="76" lengthAdjust="spacingAndGlyphs">Document Info</text>
<path d="M1777,937l2,-2.5l2,2.5M1777,941l2,2.5l2,-2.5" fill="none" stroke="#bbb"/>
<text x="1787" y="943" class="w" textLength="52" lengthAdjust="spacingAndGlyphs">Attributes</text>
<use href="#menu" x="1903" y="936"/>
<rect x="1685.5" y="961" width="11" height="11" rx="1.5" fill="#4c4c4c" stroke="#cfcfcf"/>
<text x="1702" y="970" class="b" style="fill:#e6e6e6" textLength="63" lengthAdjust="spacingAndGlyphs">Overprint Fill</text>
<rect x="1685.5" y="981" width="11" height="11" rx="1.5" fill="none" stroke="#6f6f6f"/>
<text x="1702" y="990" class="b" style="fill:#7c7c7c" textLength="79" lengthAdjust="spacingAndGlyphs">Overprint Stroke</text>
</svg>
</body></html>
